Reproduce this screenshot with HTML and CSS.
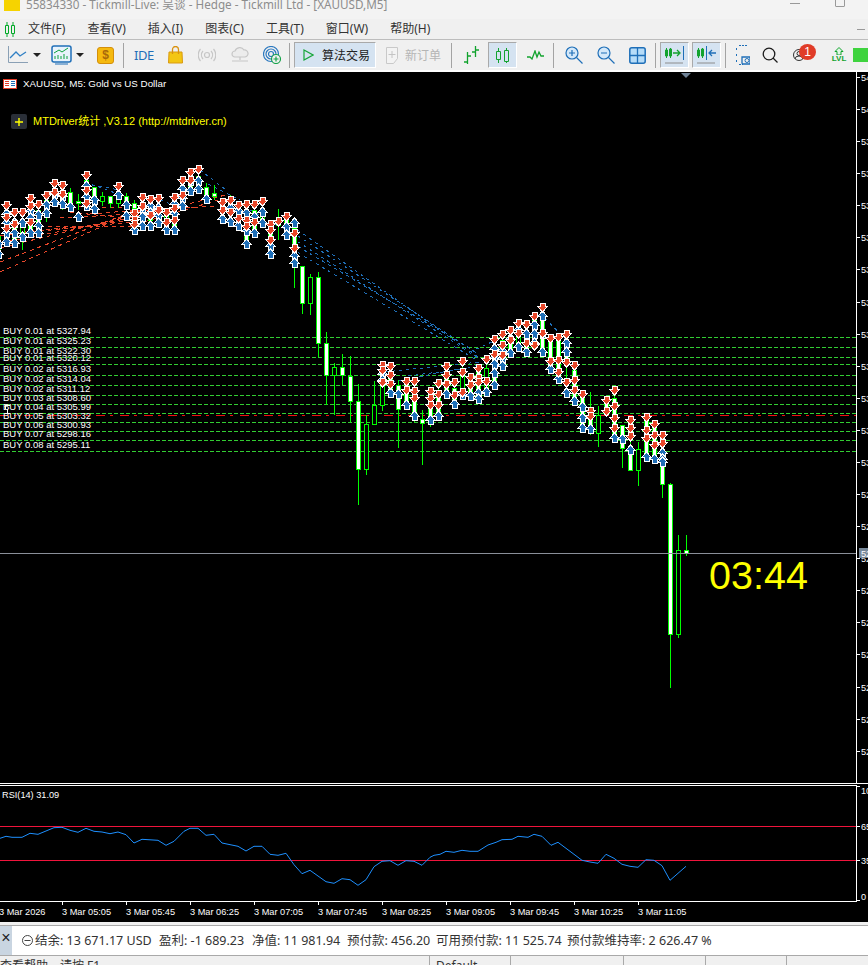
FILE: index.html
```html
<!DOCTYPE html>
<html lang="zh">
<head>
<meta charset="utf-8">
<title>MetaTrader 5</title>
<link rel="stylesheet" href="styles.css">
</head>
<body>
<header class="titlebar">
  <span class="app-logo"></span>
  <span class="title-text">55834330 - Tickmill-Live: 吴谈 - Hedge - Tickmill Ltd - [XAUUSD,M5]</span>
  <span class="win-min"></span>
  <span class="win-max"></span>
</header>
<nav class="menubar">
  <svg class="menu-logo" width="12" height="15" viewBox="0 0 12 15"><path d="M3 0v15M9 0v15" stroke="#00a826" fill="none"/><path d="M1.500 3.500h3v8h-3zM7.500 3.500h3v8h-3z" fill="#f0f0f0" stroke="#00a826"/></svg>
  <span class="menu-item m-file">文件(F)</span>
  <span class="menu-item">查看(V)</span>
  <span class="menu-item">插入(I)</span>
  <span class="menu-item">图表(C)</span>
  <span class="menu-item">工具(T)</span>
  <span class="menu-item">窗口(W)</span>
  <span class="menu-item">帮助(H)</span>
  <span class="menu-close"></span>
</nav>
<div class="toolbar">
  <svg class="ic ml8" width="20" height="18" viewBox="0 0 20 18"><path d="M.5 0v16.500H20" stroke="#8aa0b5" fill="none"/><path d="M2 12l6-6 4 4 6-4" stroke="#2f7fc4" stroke-width="1.300" fill="none"/></svg>
  <span class="drop ml5"></span>
  <svg class="ic ml10" width="21" height="20" viewBox="0 0 21 20"><rect x="1" y="1" width="19" height="16" rx="2" fill="#e8f3fc" stroke="#1f6fb8" stroke-width="1.500"/><path d="M3 8l5-3 3 2 6-4" stroke="#0aa23c" fill="none"/><path d="M4 14v-3M7 14v-4M10 14v-3M13 14v-5M16 14v-3" stroke="#0aa23c"/><path d="M4 19h13" stroke="#1f6fb8"/></svg>
  <span class="drop ml4"></span>
  <span class="dollar ml13">$</span>
  <span class="sep ml9"></span>
  <span class="ide ml10">IDE</span>
  <svg class="ic ml15" width="15" height="18" viewBox="0 0 15 18"><path d="M1 6h13l.5 11H.5z" fill="#f3c613" stroke="#d99a12"/><path d="M4.500 8V3.500a3 3 0 0 1 6 0V8" fill="none" stroke="#d9920f" stroke-width="1.300"/></svg>
  <svg class="ic ml15" width="18" height="14" viewBox="0 0 18 14" fill="none" stroke="#c6c6c6" stroke-width="1.200"><circle cx="9" cy="7" r="2.500"/><path d="M5 3a6 6 0 0 0 0 8M13 3a6 6 0 0 1 0 8M2.500 1a9 9 0 0 0 0 12M15.500 1a9 9 0 0 1 0 12"/></svg>
  <svg class="ic ml15" width="18" height="16" viewBox="0 0 18 16" fill="none" stroke="#c6c6c6" stroke-width="1.200"><path d="M4 10a3 3 0 0 1 0-6 5 5 0 0 1 9-1 3.500 3.500 0 0 1 1 7z" fill="#ececec"/><path d="M9 10v3M1 14h16"/></svg>
  <svg class="ic ml14" width="18" height="18" viewBox="0 0 18 18" fill="none" stroke="#2a78bf" stroke-width="1.200"><circle cx="8" cy="8" r="7.500"/><circle cx="8" cy="8" r="5"/><circle cx="8" cy="8" r="2.500"/><circle cx="13" cy="13" r="4.500" fill="#f0f0f0" stroke="#16a34a"/><path d="M13 10.500v5M10.500 13h5" stroke="#16a34a"/></svg>
  <span class="sep ml8"></span>
  <span class="tbtn algo ml4">
    <svg width="11" height="12" viewBox="0 0 11 12"><path d="M1 1l9 5-9 5z" fill="none" stroke="#17a63a" stroke-width="1.200"/></svg>
    <span class="algo-text">算法交易</span>
  </span>
  <svg class="ic ml9" width="14" height="17" viewBox="0 0 14 17"><path d="M1.500.500h11v11l-4 5h-7z" fill="#f3f3f3" stroke="#c9c9c9"/><path d="M7 4v7M3.500 7.500h7" stroke="#c4c4c4"/></svg>
  <span class="neworder ml6">新订单</span>
  <span class="sep ml10"></span>
  <svg class="ic ml11" width="17" height="18" viewBox="0 0 17 18" stroke="#12a32e" fill="none"><path d="M4.500 6v12M1 16h3.500M4.500 10H8M12.500 0v11M9 6h3.500M12.500 4H16" stroke-width="1.300"/></svg>
  <span class="tbtn candle ml8"><svg width="13" height="15" viewBox="0 0 13 15" fill="none" stroke="#12a32e"><path d="M2.500 0v15M10.500 0v15"/><path d="M.5 3.500h4v8h-4zM8.500 2.500h4v11h-4z" fill="#d5e3f1"/></svg></span>
  <svg class="ic ml10" width="17" height="10" viewBox="0 0 17 10"><path d="M0 7h3l2 2 3-8 2 6 2-5 2 4h3" fill="none" stroke="#12a32e" stroke-width="1.300"/></svg>
  <span class="sep ml9"></span>
  <svg class="ic ml11" width="18" height="18" viewBox="0 0 18 18" fill="none" stroke="#1f6fb8" stroke-width="1.200"><circle cx="7" cy="7" r="6" fill="#d4e8f9"/><path d="M11.500 11.500l6 6M4 7h6M7 4v6"/></svg>
  <svg class="ic ml14" width="18" height="18" viewBox="0 0 18 18" fill="none" stroke="#1f6fb8" stroke-width="1.200"><circle cx="7" cy="7" r="6" fill="#d4e8f9"/><path d="M11.500 11.500l6 6M4 7h6"/></svg>
  <svg class="ic ml14" width="17" height="17" viewBox="0 0 17 17"><rect x=".8" y=".8" width="15.400" height="15.400" rx="2" fill="#b6dcf8" stroke="#1f6fb8" stroke-width="1.500"/><path d="M8.500 1v15M1 8.500h15" stroke="#1f6fb8" stroke-width="1.300"/></svg>
  <span class="sep ml9"></span>
  <span class="tbtn shift ml4"><svg width="21" height="18" viewBox="0 0 21 18" fill="none"><path d="M2.500 2v10M6.500 2v10" stroke="#12a32e"/><path d="M1.500 4h2v6h-2zM5.500 3h2v7h-2z" stroke="#12a32e"/><path d="M9 7h6M13 4l3 3-3 3" stroke="#12a32e" stroke-width="1.300"/><path d="M19.500 0v14" stroke="#1f6fb8"/><path d="M1 17h18" stroke="#8c8c8c"/></svg></span>
  <span class="tbtn shift ml3"><svg width="21" height="18" viewBox="0 0 21 18" fill="none"><path d="M2.500 2v10M6.500 2v10" stroke="#12a32e"/><path d="M1.500 4h2v6h-2zM5.500 3h2v7h-2z" stroke="#12a32e"/><path d="M10.500 0v14" stroke="#1f6fb8"/><path d="M20 7h-6M16 4l-3 3 3 3" stroke="#1f6fb8" stroke-width="1.300"/><path d="M1 17h18" stroke="#8c8c8c"/></svg></span>
  <span class="sep ml4"></span>
  <svg class="ic ml10" width="14" height="20" viewBox="0 0 14 20" fill="none" stroke="#1f6fb8"><path d="M3 .5h8M.5 3v3M.5 9v3M.5 15v3M3 19.500h4" stroke-dasharray="2 1"/><path d="M6 12h8v7H7a1 1 0 0 1-1-1z" fill="#f0f0f0" stroke-width="1.300"/><circle cx="11" cy="15.500" r="2"/></svg>
  <svg class="ic ml12" width="16" height="16" viewBox="0 0 16 16" fill="none" stroke="#1c1c1c" stroke-width="1.300"><circle cx="7" cy="7" r="5.800"/><path d="M11 11l4.500 4.500"/></svg>
  <span class="user ml15">
    <svg width="12" height="12" viewBox="0 0 12 12" fill="none" stroke="#333"><circle cx="6" cy="6" r="5.500"/><circle cx="6" cy="4.500" r="2"/><path d="M2 10a4 3 0 0 1 8 0"/></svg>
    <span class="badge">1</span>
  </span>
  <span class="lvl ml15">
    <svg width="10" height="8" viewBox="0 0 10 8"><path d="M5 .5l4 4H7V8H3V4.500H1z" fill="#e2f6e6" stroke="#12a32e"/></svg>
    <span class="lvl-text">LVL</span>
  </span>
  <span class="green-box ml7"></span>
</div>
<main class="chart-area">
  <svg id="price" class="chart" width="868" height="711" viewBox="0 72 868 711"></svg>
  <span class="chart-rule"></span>
  <svg id="rsi" class="chart" width="868" height="137" viewBox="0 785 868 137"></svg>
</main>
<footer>
  <div class="status">
    <span class="status-close">×</span>
    <svg class="status-icon" width="11" height="11" viewBox="0 0 11 11" fill="none" stroke="#444"><circle cx="5.500" cy="5.500" r="5"/><path d="M2.500 5.500h6"/></svg>
    <span class="stat s1">结余: 13 671.17 USD</span>
    <span class="stat s2">盈利: -1 689.23</span>
    <span class="stat s3">净值: 11 981.94</span>
    <span class="stat s4">预付款: 456.20</span>
    <span class="stat s5">可用预付款: 11 525.74</span>
    <span class="stat s6">预付款维持率: 2 626.47 %</span>
  </div>
  <div class="helpbar">
    <span class="cell c-help">查看帮助，请按 F1</span>
    <span class="cell c-default">Default</span>
    <span class="cell c-a"></span>
    <span class="cell c-b"></span>
    <span class="cell c-c"></span>
    <span class="cell c-d"></span>
  </div>
</footer>
<script src="chart.js"></script>
</body>
</html>
```
FILE: styles.css
```css
* { box-sizing: border-box; }
html, body { margin: 0; padding: 0; }
body {
  width: 868px;
  height: 965px;
  overflow: hidden;
  background: #f0f0f0;
  font-family: "Noto Sans", "Noto Sans CJK SC", sans-serif;
  color: #333;
}

.titlebar { height: 19px; display: flex; align-items: flex-start; background: #f3f3f3; }
.app-logo { width: 16px; height: 11px; margin-left: 4px; background: #f6d300; }
.title-text { margin-left: 6px; font-size: 11.7px; line-height: 9px; color: #8d8d8d; white-space: nowrap; }
.win-min { margin-left: auto; margin-top: 3px; width: 10px; height: 1px; background: #999; }
.win-max { margin-left: 35px; margin-right: 23px; margin-top: -2px; width: 10px; height: 9px; border: 1px solid #999; border-radius: 1px; }

.menubar { height: 21px; display: flex; align-items: center; background: #f0f0f0; border-bottom: 1px solid #bdbdbd; font-size: 12px; }
.menu-logo { margin-left: 4px; }
.menu-item { margin-left: 22px; line-height: 20px; white-space: nowrap; color: #333; }
.menu-item.m-file { margin-left: 12px; }
.menu-close { margin-left: auto; margin-right: 3px; width: 8px; height: 1px; background: #999; }

.toolbar { height: 32px; display: flex; align-items: center; background: #f0f0f0; border-bottom: 2px solid #fff; }
.ic { flex: none; }
.ml3 { margin-left: 3px; } .ml4 { margin-left: 4px; } .ml5 { margin-left: 5px; }
.ml6 { margin-left: 6px; } .ml7 { margin-left: 7px; } .ml8 { margin-left: 8px; }
.ml9 { margin-left: 9px; } .ml10 { margin-left: 10px; } .ml11 { margin-left: 11px; }
.ml12 { margin-left: 12px; } .ml13 { margin-left: 13px; } .ml14 { margin-left: 14px; } .ml15 { margin-left: 15px; }
.drop { width: 8px; height: 4px; border: 4px solid transparent; border-top: 4px solid #222; border-bottom: 0; flex: none; }
.dollar { flex: none; width: 17px; height: 17px; border-radius: 3px; background: #f5b90f; border: 1px solid #d48f0a; color: #a8690a; font: bold 12px/15px "Liberation Sans", sans-serif; text-align: center; }
.sep { flex: none; width: 1px; height: 25px; background: #a3a3a3; }
.ide { flex: none; width: 19px; color: #1f6fb8; font: 13px/16px "Noto Sans", sans-serif; letter-spacing: -.5px; white-space: nowrap; }
.tbtn { flex: none; height: 26px; display: flex; align-items: center; justify-content: center; background: #d5e3f1; border: 1px solid; border-color: #a9a9a9 #fff #fff #a9a9a9; }
.algo { width: 82px; justify-content: flex-start; padding-left: 8px; }
.algo-text { margin-left: 8px; font-size: 12px; color: #222; white-space: nowrap; }
.candle { width: 29px; }
.shift { width: 29px; }
.neworder { flex: none; width: 36px; font-size: 12px; color: #b5b5b5; white-space: nowrap; }
.user { flex: none; width: 24px; height: 24px; position: relative; display: flex; align-items: center; }
.badge { position: absolute; left: 6px; top: 1px; width: 17px; height: 16px; border-radius: 50%; background: #e03c28; color: #fff; font: 12px/16px "Liberation Sans", sans-serif; text-align: center; }
.lvl { flex: none; width: 14px; display: flex; flex-direction: column; align-items: center; }
.lvl-text { font: bold 8px/8px "Liberation Sans", sans-serif; color: #12a32e; }
.green-box { flex: 1; height: 14px; background: #3fd33f; }

.chart-area { background: #000; height: 850px; }
.chart { display: block; background: #000; font-family: "Liberation Sans", "Noto Sans CJK SC", sans-serif; }
.chart-rule { display: block; height: 2px; background: #000; border-top: 1px solid #fff; }
.axis, .lbl { font-size: 9.2px; fill: #fff; }
.buy { font-size: 9.5px; fill: #fff; }
.hdr { font-size: 9.8px; fill: #fff; }
.ylw { font-size: 11px; fill: #ffff00; }
.clock { font-size: 39.5px; fill: #ffff00; }

footer { height: 43px; background: #f0f0f0; padding-top: 3px; }
.status { height: 31px; display: flex; align-items: center; background: #fff; border-top: 1px solid #a9a9a9; border-bottom: 1px solid #a9a9a9; font-size: 12.5px; color: #333; white-space: nowrap; }
.status-close { width: 12px; height: 29px; background: #c9d5e1; font: 16px/24px "Liberation Sans", sans-serif; color: #222; text-align: center; flex: none; }
.status-icon { margin-left: 10px; margin-right: 2px; flex: none; }
.stat { line-height: 18px; flex: none; }
.s1 { width: 124px; } .s2 { width: 93px; } .s3 { width: 95px; }
.s4 { width: 89px; } .s5 { width: 131px; }

.helpbar { display: flex; height: 9px; font-size: 12px; line-height: 20px; overflow: hidden; color: #333; }
.cell { display: block; height: 9px; white-space: nowrap; border-right: 1px solid #a9a9a9; }
.c-help { width: 430px; }
.c-default { width: 81px; padding-left: 6px; }
.c-a { width: 113px; } .c-b { width: 82px; } .c-c { width: 81px; } .c-d { flex: 1; border-right: 0; }
```
FILE: chart.js
```js
const NS = "http://www.w3.org/2000/svg";
function add(svg, tag, attrs, text) {
  const el = document.createElementNS(NS, tag);
  for (const k in attrs) el.setAttribute(k, attrs[k]);
  if (text !== undefined) el.textContent = text;
  svg.appendChild(el);
  return el;
}
const GREEN = "#00ff00";
const price = document.getElementById("price");
const rsi = document.getElementById("rsi");

/* ----- horizontal order levels ----- */
[337,347,357,364,375,385,395,404,413,422,431,440,451].forEach(y =>
  add(price, "line", {x1:0, x2:856, y1:y+.5, y2:y+.5, stroke:"#32cd32", "stroke-dasharray":"4 2"}));
add(price, "line", {x1:0, x2:856, y1:415.5, y2:415.5, stroke:"#f01010", "stroke-dasharray":"9 5 3 7"});

/* ----- dashed trade lines ----- */
const redLines = [[0,272,130,214],[0,262,132,212],[0,248,134,215],[0,243,130,218],[0,236,136,220],[14,232,136,222],[40,226,136,226],
  [60,218,132,214],[90,214,140,210],[130,226,222,199],[120,220,230,194],[130,212,214,206],[46,206,132,208],[70,212,140,220]];
redLines.forEach(l => add(price, "line", {x1:l[0],y1:l[1],x2:l[2],y2:l[3],stroke:"#e8472a","stroke-dasharray":"4 4","shape-rendering":"crispEdges"}));
const blueLines = [[292,226,478,357],[292,232,478,354],[292,238,478,358],[292,243,476,352],[292,249,478,361],
  [385,372,480,362],[392,382,480,365],[408,376,470,368],[85,182,118,194],[92,185,120,190],[200,170,226,190],[208,184,240,200],[160,200,176,206],[232,200,290,232],[470,352,496,340],[545,318,566,340]];
blueLines.forEach(l => add(price, "line", {x1:l[0],y1:l[1],x2:l[2],y2:l[3],stroke:"#1f6fb8","stroke-dasharray":"3 4","shape-rendering":"crispEdges"}));

/* ----- candles: x, wickTop, wickBottom, bodyTop, bodyBottom, filled ----- */
const candles = [
  [-2,230,262,236,250,1],[6,205,245,210,238,1],[14,215,248,222,240,1],[22,212,250,220,235,0],[30,200,235,205,228,1],[38,204,235,210,230,1],
  [46,195,222,200,212,1],[54,185,205,190,200,0],[62,188,210,192,204,1],[70,188,206,192,204,1],[78,194,210,201,203,1],[86,176,208,180,203,1],
  [94,187,205,187,197,1],[102,192,206,196,201,0],[110,196,208,196,203,1],[118,192,208,199,203,0],[126,193,212,196,206,1],[134,200,212,203,208,1],
  [142,212,222,215,219,0],[150,205,225,210,220,1],[158,200,225,208,220,1],[166,208,230,213,225,0],[174,198,230,205,225,1],[182,182,206,188,200,1],
  [190,172,192,178,188,1],[198,170,190,176,186,1],[206,183,200,187,195,1],[214,185,200,193,196,1],[222,198,210,198,205,1],[230,195,215,200,210,1],
  [238,203,225,208,220,1],[246,205,245,210,240,1],[254,205,235,210,230,1],[262,205,225,212,220,0],[270,225,255,228,252,1],[278,209,240,222,225,1],[286,215,236,220,230,1],
  [294,225,288,228,266,1],[302,266,314,266,303,1],[310,274,315,277,303,0],[318,272,357,277,343,1],[326,332,405,343,375,1],[334,363,415,367,375,0],
  [342,354,385,367,375,1],[350,356,422,376,401,1],[358,384,505,401,469,1],[366,415,475,424,469,0],[374,381,424,405,424,0],[382,365,411,385,405,0],
  [390,370,395,375,392,1],[398,380,448,385,409,1],[406,385,405,388,402,1],[414,390,422,395,418,1],[422,410,465,419,423,1],[430,395,427,400,418,1],
  [438,385,420,390,415,1],[446,370,395,375,390,1],[454,385,405,388,402,1],[462,365,395,370,392,0],[470,375,397,380,394,1],[478,365,400,370,396,1],
  [486,360,392,368,388,0],[494,338,386,345,382,1],[502,335,367,340,362,1],[510,330,353,335,350,1],[518,323,348,328,345,0],[526,324,352,330,350,1],
  [534,316,345,320,342,1],[542,307,352,312,350,1],[550,338,370,342,366,1],[558,337,380,340,376,1],[566,334,392,340,360,1],[574,365,402,370,398,1],
  [582,392,428,396,425,1],[590,392,435,410,428,1],[598,406,447,415,433,0],[606,400,415,400,412,1],[614,390,438,398,436,1],[622,425,468,425,448,1],
  [630,420,471,450,470,1],[638,442,486,449,470,0],[646,417,458,420,455,1],[654,424,460,428,456,1],[662,436,498,464,484,1],
  [670,483,688,484,634,1],[678,535,638,550,634,0],[686,535,556,550,553,1]
];
candles.forEach(c => {
  const [x, wt, wb, bt, bb, filled] = c;
  add(price, "rect", {x:x, y:wt, width:1, height:wb-wt, fill:GREEN});
  add(price, "rect", {x:x-2, y:bt, width:5, height:bb-bt+1, fill:GREEN});
  add(price, "rect", {x:x-1, y:bt+1, width:3, height:Math.max(bb-bt-1,1), fill:filled ? "#fff" : "#000"});
});

/* ----- arrows: x, red (sell) ys, blue (buy) ys ----- */
const DOWN = "-2.5,-4.5 2.5,-4.5 2.5,-1 5,-1 0,4.5 -5,-1 -2.5,-1";
const UP = "-2.5,4.5 2.5,4.5 2.5,1 5,1 0,-4.5 -5,1 -2.5,1";
const marks = [
  [-2,[],[253,243]],[6,[205,217,228],[213,222,232,241]],[14,[212,224],[222,232,242]],[22,[212],[222,236]],[30,[198,206,222],[210,217,232]],
  [38,[204],[214,225,232]],[46,[195],[204,212]],[54,[183,192],[193,201]],[62,[185,194],[195,203]],[70,[],[206]],[78,[],[216]],
  [86,[175,190,203],[185,196,205]],[94,[],[199,208]],[118,[186],[194]],[126,[],[204,215]],[134,[213,220,224],[229]],
  [142,[197,206],[207,216,225]],[150,[199,215],[205,212,225]],[158,[198,210],[207,215,222]],[166,[212,222],[229]],[174,[197,208,220],[203,213,229]],
  [182,[180,195],[188,197,205]],[190,[172,180],[180,190]],[198,[169],[180,188]],[206,[],[198]],[222,[202,210],[218]],[230,[200,212],[207,221]],
  [238,[205,218],[210,225]],[246,[204,220,226],[212,230,243]],[254,[204,222],[216,232]],[262,[201],[211,222]],[270,[224,230,240],[245,253]],
  [278,[221],[]],[286,[216],[226,234]],[294,[233,248],[222,255,262]],
  [382,[365,370,382],[373,379]],[390,[366,375,384],[392]],[398,[],[393]],[406,[381,390],[404]],[414,[381,391,398],[415]],
  [430,[391,398,405],[419]],[438,[383,394,405],[415]],[446,[366,375,384],[393]],[454,[382,395],[403]],[462,[361,372,392],[394]],
  [470,[377,385],[395]],[478,[368,378,382],[392,398]],[486,[359,381],[391]],[494,[339,354],[348,357,363,372,384]],[502,[334,345,355],[350,358,365]],
  [510,[330,340],[338,352]],[518,[323,333],[329,346]],[526,[324,343],[333,351]],[534,[316,345],[324,333,342]],[542,[307,333],[315,333,351]],
  [550,[338,361],[368]],[558,[337,360,372],[378]],[566,[334,362,382],[342,351,392]],[574,[365,380,390],[400]],[582,[394],[406,417,427]],
  [590,[411,416],[428]],[606,[400,411],[]],[614,[390,406,418,428],[437]],[622,[],[438]],[630,[420,428,436],[449]],
  [646,[417,430,438],[456]],[654,[424,435,445],[458]],[662,[435,443],[452,458,461]]
];
const arrow = (x, y, pts, fill) => add(price, "polygon", {points:pts, transform:`translate(${x+.5} ${y+.5})`, fill:fill, stroke:"#fff", "stroke-width":1, "shape-rendering":"crispEdges"});
marks.forEach(m => {
  m[2].forEach(y => arrow(m[0], y, UP, "#1f6fb8"));
  m[1].forEach(y => arrow(m[0], y, DOWN, "#e8472a"));
});

/* ----- current price line and axis ----- */
add(price, "rect", {x:0, y:553, width:856, height:1, fill:"#8a8f99"});
add(price, "rect", {x:856, y:72, width:1, height:711, fill:"#fff"});
for (let k = 0; k <= 21; k++) {
  const y = Math.round(77 + 32.08 * k);
  add(price, "rect", {x:857, y:y, width:3, height:1, fill:"#fff"});
  add(price, "text", {x:861, y:y+4, class:"axis"}, k < 2 ? "5400" : k < 13 ? "5300" : "5200");
}
add(price, "rect", {x:859, y:548, width:9, height:10, fill:"#778899"});
add(price, "text", {x:861, y:557, class:"axis"}, "5285");
add(price, "polygon", {points:"681,73 691,73 686,78", fill:"#6f8296"});

/* ----- labels ----- */
add(price, "text", {x:23, y:87, class:"hdr"}, "XAUUSD, M5:  Gold vs US Dollar");
add(price, "rect", {x:3.5, y:79.5, width:13, height:9, fill:"#fff", stroke:"#e03c28"});
add(price, "rect", {x:5, y:81, width:4, height:1, fill:"#e03c28"});
add(price, "rect", {x:5, y:83, width:4, height:1, fill:"#e03c28"});
add(price, "rect", {x:5, y:85, width:4, height:1, fill:"#e03c28"});
add(price, "rect", {x:11, y:81, width:4, height:1, fill:"#1f6fb8"});
add(price, "rect", {x:11, y:83, width:4, height:1, fill:"#1f6fb8"});
add(price, "rect", {x:11, y:85, width:4, height:1, fill:"#1f6fb8"});
add(price, "rect", {x:11, y:114, width:16, height:15, rx:2, fill:"#2a2f38"});
add(price, "path", {d:"M19 118v8M15 122h8", stroke:"#ffff00", "stroke-width":1.4});
add(price, "text", {x:33, y:125, class:"ylw"}, "MTDriver统计 ,V3.12 (http://mtdriver.cn)");
add(price, "text", {x:709, y:589, class:"clock"}, "03:44");
const buys = [[331,"0.01","5327.94"],[341,"0.01","5325.23"],[351,"0.01","5322.30"],[358,"0.01","5320.12"],[369,"0.02","5316.93"],[379,"0.02","5314.04"],
  [389,"0.02","5311.12"],[398,"0.03","5308.60"],[407,"0.04","5305.99"],[416,"0.05","5303.32"],[425,"0.06","5300.93"],[434,"0.07","5298.16"],[445,"0.08","5295.11"]];
buys.forEach(b => add(price, "text", {x:3, y:b[0]+3, class:"buy"}, `BUY ${b[1]} at ${b[2]}`));
add(price, "path", {d:"M5 405.500h5M5.500 405v4M7.500 409v5M5 413.500h5", stroke:"#fff", fill:"none"});

/* ----- RSI window ----- */
add(rsi, "rect", {x:0, y:785, width:857, height:1, fill:"#fff"});
add(rsi, "rect", {x:0, y:901, width:857, height:1, fill:"#fff"});
add(rsi, "rect", {x:856, y:785, width:1, height:117, fill:"#fff"});
add(rsi, "rect", {x:0, y:826, width:856, height:1, fill:"#f0143c"});
add(rsi, "rect", {x:0, y:860, width:856, height:1, fill:"#f0143c"});
add(rsi, "text", {x:2, y:798, class:"lbl"}, "RSI(14) 31.09");
[[790,"100"],[826,"65"],[860,"35"],[896,"0"]].forEach(t => {
  add(rsi, "rect", {x:857, y:t[0] === 790 ? 786 : t[0] === 896 ? 900 : t[0], width:3, height:1, fill:"#fff"});
  add(rsi, "text", {x:861, y:t[0]+4, class:"axis"}, t[1]);
});
const zoomA = [[0,175],[18,169],[36,172],[66,172],[90,160],[114,163],[162,143],[186,142],[210,151],[234,157],[258,145],[282,154],[306,156],[330,161],[354,156],[378,164],[402,189],[426,178],[474,181],[498,196],[522,184],[552,154],[570,145],[594,145],[618,166],[642,163],[666,189],[714,199],[738,213],[762,199],[786,199],[810,223],[834,226],[858,220],[882,254],[906,281],[930,271],[978,305],[1002,310],[1026,296],[1050,299],[1074,316],[1098,299],[1122,260],[1146,244],[1170,242],[1194,256],[1218,242],[1242,244],[1266,256],[1290,232]];
const zoomB = [[0,226],[18,223],[36,214],[60,217],[84,211],[108,214],[132,214],[162,195],[186,187],[204,179],[234,178],[252,169],[282,172],[300,163],[324,169],[351,196],[372,187],[420,223],[444,241],[468,246],[492,250],[516,223],[540,235],[564,253],[588,259],[612,262],[636,239],[660,241],[684,257],[708,301],[756,259]];
const pts = zoomA.map(p => [p[0]/3, 780+p[1]/3]).concat(zoomB.map(p => [434+p[0]/3, 780+p[1]/3]));
add(rsi, "polyline", {points:pts.map(p => p[0].toFixed(1)+","+p[1].toFixed(1)).join(" "), fill:"none", stroke:"#1e90ff"});
[["3 Mar 2026",-12],["3 Mar 05:05",62],["3 Mar 05:45",126],["3 Mar 06:25",190],["3 Mar 07:05",254],["3 Mar 07:45",318],["3 Mar 08:25",382],["3 Mar 09:05",446],["3 Mar 09:45",510],["3 Mar 10:25",574],["3 Mar 11:05",638]].forEach(t => {
  if (t[1] > 0) add(rsi, "rect", {x:t[1], y:902, width:1, height:3, fill:"#fff"});
  add(rsi, "text", {x:t[1] < 0 ? -1 : t[1], y:915, class:"lbl"}, t[0]);
});
```
